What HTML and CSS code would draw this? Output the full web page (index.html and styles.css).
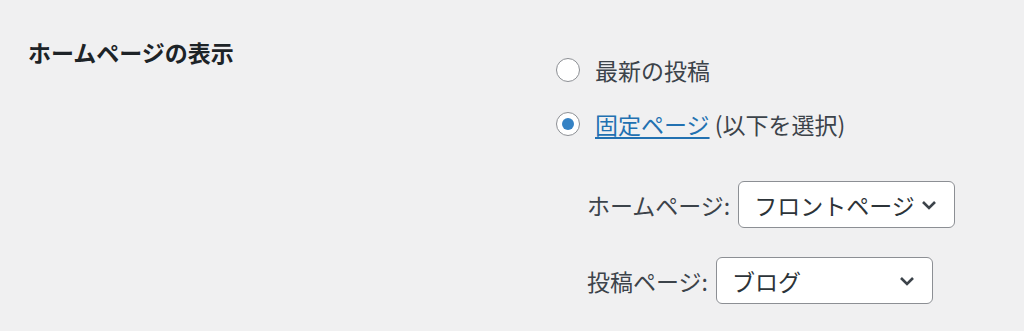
FILE: index.html
```html
<!DOCTYPE html>
<html lang="ja">
<head>
  <meta charset="UTF-8"/>
  <meta name="viewport" content="width=device-width, initial-scale=1.0"/>
  <title>表示設定</title>
  <link rel="stylesheet" href="styles.css">
</head>
<body>
  <div class="form-row">
    <div class="form-label">ホームページの表示</div>
    <div class="form-field">
      <label class="radio-line">
        <span class="radio"></span>
        最新の投稿
      </label>
      <label class="radio-line">
        <span class="radio checked"></span>
        <a href="#" class="link">固定ページ</a>&nbsp;(以下を選択)
      </label>

      <div class="page-choices">
        <div class="choice">
          <span class="choice-label">ホームページ:</span>
          <div class="select">
            <span>フロントページ</span>
            <svg class="chevron" width="16" height="10" viewBox="0 0 16 10"><path d="M2 2 L8 8 L14 2" fill="none" stroke="#3c434a" stroke-width="2.6"/></svg>
          </div>
        </div>
        <div class="choice">
          <span class="choice-label">投稿ページ:</span>
          <div class="select">
            <span>ブログ</span>
            <svg class="chevron" width="16" height="10" viewBox="0 0 16 10"><path d="M2 2 L8 8 L14 2" fill="none" stroke="#3c434a" stroke-width="2.6"/></svg>
          </div>
        </div>
      </div>
    </div>
  </div>
</body>
</html>
```

FILE: styles.css
```css
body {
  margin: 0;
  background-color: #f0f0f1;
  color: #3c434a;
  font-family: "Noto Sans CJK JP", "Noto Sans", sans-serif;
  font-size: 23px;
}
.form-row {
  display: flex;
  padding: 36px 0 0 28px;
}
.form-label {
  width: 528px;
  flex-shrink: 0;
  font-weight: 600;
  line-height: 32px;
  color: #1d2327;
}
.form-field {
  padding-top: 18px;
}
.radio-line {
  display: flex;
  align-items: center;
  line-height: 32px;
  margin-bottom: 22px;
}
.radio {
  width: 22px;
  height: 22px;
  border: 1.5px solid #8c8f94;
  border-radius: 50%;
  background-color: #fff;
  margin-right: 15px;
  display: flex;
  align-items: center;
  justify-content: center;
}
.radio.checked::before {
  content: "";
  width: 12px;
  height: 12px;
  border-radius: 50%;
  background-color: #3582c4;
}
.link {
  color: #2271b1;
  text-decoration: underline;
  text-underline-offset: 3px;
}
.page-choices {
  padding-left: 31px;
  margin-top: 41px;
}
.choice {
  display: flex;
  align-items: center;
  margin-bottom: 29px;
}
.choice-label {
  margin-right: 8px;
}
.select {
  width: 217px;
  height: 47px;
  box-sizing: border-box;
  border: 1.5px solid #8c8f94;
  border-radius: 6px;
  background-color: #fff;
  color: #2c3338;
  display: flex;
  align-items: center;
  justify-content: space-between;
  padding: 0 17px 0 15px;
}
```
